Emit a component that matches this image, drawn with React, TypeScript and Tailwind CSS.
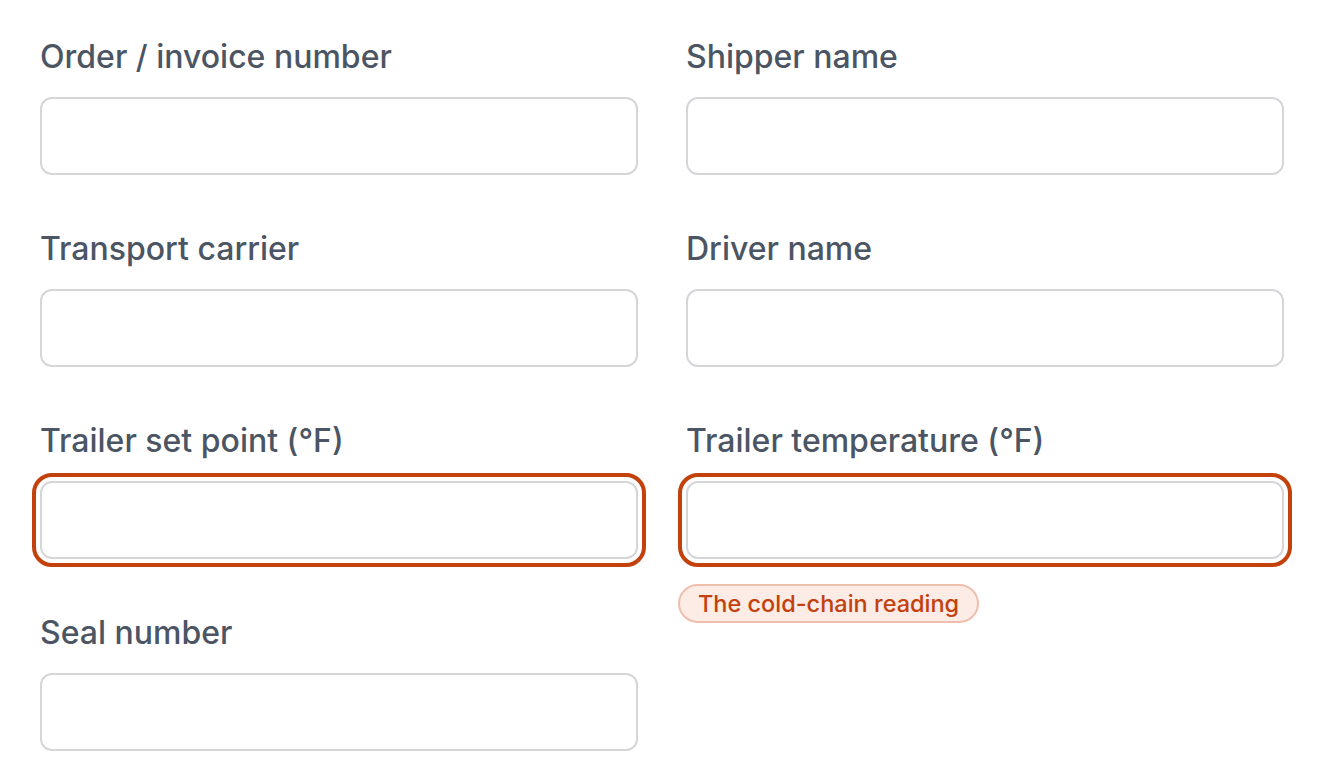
import React from "react";

const fields: { label: string; error?: boolean; badge?: string }[] = [
  { label: "Order / invoice number" },
  { label: "Shipper name" },
  { label: "Transport carrier" },
  { label: "Driver name" },
  { label: "Trailer set point (°F)", error: true },
  { label: "Trailer temperature (°F)", error: true, badge: "The cold-chain reading" },
  { label: "Seal number" },
];

export default function App() {
  return (
    <div className="min-h-screen bg-white font-['Inter',_'Liberation_Sans',_sans-serif]">
      <div className="grid grid-cols-2 gap-x-12 gap-y-[54px] px-10 pt-[37px]">
        {fields.map((f) => (
          <div key={f.label} className="flex flex-col">
            <label className="text-[32px] font-medium leading-[40px] text-[#4b5563] mb-5">{f.label}</label>
            <div className="relative">
              <input
                className={
                  f.error
                    ? "block w-full h-[78px] rounded-xl border-2 border-[#d6d6da] bg-white outline-4 outline-solid outline-[#c2410c] outline-offset-4"
                    : "block w-full h-[78px] rounded-xl border-2 border-[#d6d6da] bg-white outline-none"
                }
              />
              {f.badge && (
                <span className="absolute left-[-8px] top-[calc(100%+25px)] inline-flex items-center h-[39px] px-[18px] rounded-full border-2 border-[#efbfae] bg-[#fdebe5] text-[23.5px] font-medium text-[#c2410c] leading-none whitespace-nowrap">
                  {f.badge}
                </span>
              )}
            </div>
          </div>
        ))}
      </div>
    </div>
  );
}
